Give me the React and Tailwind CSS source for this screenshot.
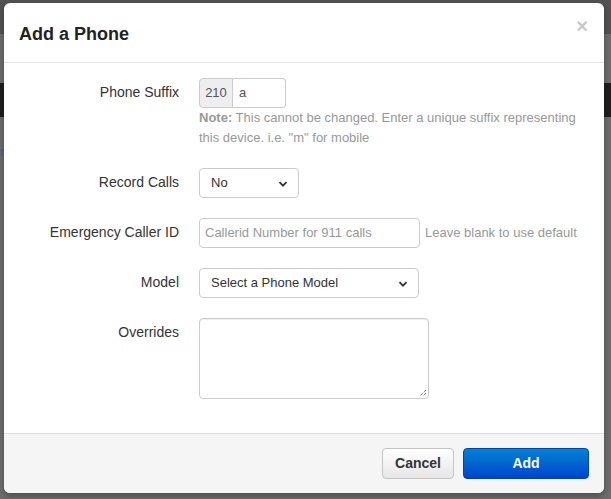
import React from "react";

const Chevron = () => (
    <svg width="10" height="10" viewBox="0 0 10 10" className="absolute right-[10px] top-[10px] pointer-events-none">
        <path d="M1.5 3.2 L5 6.7 L8.5 3.2" fill="none" stroke="#333" strokeWidth="1.8" />
    </svg>
);

const Row = ({ label, children }) => (
    <div className="flex gap-5 mb-5">
        <div className="w-[160px] shrink-0 text-right text-[14px] leading-5 pt-[4px] text-[#333]">{label}</div>
        <div className="flex-1 min-w-0">{children}</div>
    </div>
);

const App = () => {
    return (
        <div className="relative w-[611px] h-[499px] overflow-hidden bg-[#6d6d6d] font-['Liberation_Sans',Arial,sans-serif]">
            {/* dimmed page behind the dialog */}
            <div className="h-[34px] bg-[#525252]" />
            <div className="h-[49px]" />
            <div className="h-[34px] bg-[#1e1e1e]" />
            <div className="h-[26px]" />
            <div className="text-[12px] text-[#2a6d80]">n</div>

            <div className="absolute left-[4px] top-[3px] w-[600px] h-[490px] bg-white rounded-[6px] shadow-[0_3px_7px_rgba(0,0,0,0.3)] flex flex-col overflow-hidden">
                <div className="relative h-[60px] border-b border-[#e5e5e5] px-[15px] flex items-center">
                    <h3 className="text-[18px] font-bold text-[#222] leading-6 mt-[3px]">Add a Phone</h3>
                    <span className="absolute right-[16px] top-[11px] text-[20px] font-bold text-[#c8c8c8] leading-6">×</span>
                </div>

                <div className="flex-1 px-[15px] pt-[15px]">
                    <Row label="Phone Suffix">
                        <div className="flex h-[30px] w-[87px]">
                            <span className="w-[34px] flex items-center justify-center bg-[#eee] border border-[#ccc] rounded-l-[4px] text-[13px] text-[#555]">210</span>
                            <div className="flex-1 border border-l-0 border-[#ccc] rounded-r-[4px] px-[6px] flex items-center text-[13px] text-[#555]">a</div>
                        </div>
                        <p className="text-[13px] leading-5 text-[#999] mt-[0px]">
                            <b className="font-bold">Note:</b> This cannot be changed. Enter a unique suffix representing this device. i.e. "m" for mobile
                        </p>
                    </Row>

                    <Row label="Record Calls">
                        <div className="relative w-[100px] h-[30px] border border-[#ccc] rounded-[4px] flex items-center px-[11px] text-[13px] text-[#333]">
                            No
                            <Chevron />
                        </div>
                    </Row>

                    <Row label="Emergency Caller ID">
                        <div className="flex items-center gap-[5px]">
                            <div className="w-[221px] h-[30px] border border-[#ccc] rounded-[4px] flex items-center px-[5px] text-[13px] text-[#999]">
                                Callerid Number for 911 calls
                            </div>
                            <span className="text-[13px] text-[#999]">Leave blank to use default</span>
                        </div>
                    </Row>

                    <Row label="Model">
                        <div className="relative w-[220px] h-[30px] border border-[#ccc] rounded-[4px] flex items-center px-[11px] text-[13px] text-[#333]">
                            Select a Phone Model
                            <Chevron />
                        </div>
                    </Row>

                    <Row label="Overrides">
                        <div className="relative w-[230px] h-[81px] border border-[#ccc] rounded-[4px] shadow-[inset_0_1px_1px_rgba(0,0,0,0.075)]">
                            <svg width="9" height="9" viewBox="0 0 9 9" className="absolute right-[1px] bottom-[1px]">
                                <path d="M8 2 L2 8 M8 5 L5 8" stroke="#555" strokeWidth="1" strokeDasharray="1 1" />
                            </svg>
                        </div>
                    </Row>
                </div>

                <div className="h-[60px] border-t border-[#ddd] bg-[#f5f5f5] flex justify-end items-start gap-[9px] pt-[14px] px-[15px]">
                    <button className="w-[72px] h-[31px] rounded-[4px] border border-[#c5c5c5] bg-gradient-to-b from-white to-[#e6e6e6] text-[14px] font-bold text-[#333]">
                        Cancel
                    </button>
                    <button className="w-[126px] h-[31px] rounded-[4px] border border-[#0044aa] bg-gradient-to-b from-[#0a80d2] to-[#0044cc] text-[14px] font-bold text-white">
                        Add
                    </button>
                </div>
            </div>
        </div>
    );
};

export default App;
